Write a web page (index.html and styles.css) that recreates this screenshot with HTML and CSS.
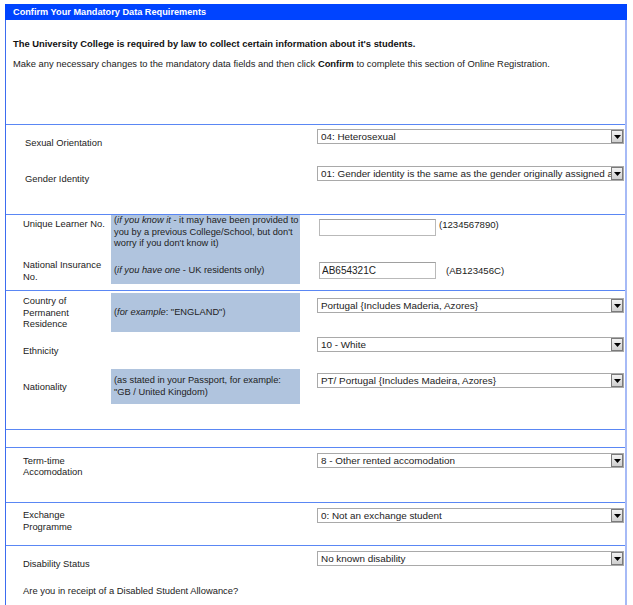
FILE: index.html
```html
<!DOCTYPE html>
<html lang="en">
<head>
<meta charset="utf-8">
<title>Confirm Your Mandatory Data Requirements</title>
<link rel="stylesheet" href="styles.css">
</head>
<body>
<div class="panel">
  <div class="head">Confirm Your Mandatory Data Requirements</div>
  <div class="body">
    <div class="intro">
      <p class="lead">The University College is required by law to collect certain information about it's students.</p>
      <p class="note">Make any necessary changes to the mandatory data fields and then click <b>Confirm</b> to complete this section of Online Registration.</p>
    </div>

    <div class="sec sec-a">
      <div class="row row-a">
        <div class="lab lab-a">Sexual Orientation</div>
        <div class="gap"></div>
        <div class="field f4"><div class="sel"><span class="val">04: Heterosexual</span><span class="btn"><svg width="7" height="4" viewBox="0 0 7 4"><path d="M0 0h7L3.5 4z" fill="#000"/></svg></span></div></div>
      </div>
      <div class="row row-a">
        <div class="lab lab-a">Gender Identity</div>
        <div class="gap"></div>
        <div class="field f5"><div class="sel"><span class="val">01: Gender identity is the same as the gender originally assigned at birth</span><span class="btn"><svg width="7" height="4" viewBox="0 0 7 4"><path d="M0 0h7L3.5 4z" fill="#000"/></svg></span></div></div>
      </div>
    </div>

    <div class="sec sec-b">
      <div class="row row-b1">
        <div class="lab top3">Unique Learner No.</div>
        <div class="help top3"><span>(<i>if you know it</i> - it may have been provided to you by a previous College/School, but don't worry if you don't know it)</span></div>
        <div class="field fin f4"><input class="txt" type="text" value=""><span class="hint h1">(1234567890)</span></div>
      </div>
      <div class="row row-b2">
        <div class="lab">National Insurance No.</div>
        <div class="help mid"><span>(<i>if you have one</i> - UK residents only)</span></div>
        <div class="field fin mid"><input class="txt" type="text" value="AB654321C"><span class="hint h2">(AB123456C)</span></div>
      </div>
    </div>

    <div class="sec sec-c">
      <div class="row row-c1">
        <div class="lab">Country of Permanent Residence</div>
        <div class="help mid"><span>(<i>for example</i>: "ENGLAND")</span></div>
        <div class="field f5"><div class="sel"><span class="val">Portugal {Includes Maderia, Azores}</span><span class="btn"><svg width="7" height="4" viewBox="0 0 7 4"><path d="M0 0h7L3.5 4z" fill="#000"/></svg></span></div></div>
      </div>
      <div class="row row-c2">
        <div class="lab">Ethnicity</div>
        <div class="gap"></div>
        <div class="field f5"><div class="sel"><span class="val">10 - White</span><span class="btn"><svg width="7" height="4" viewBox="0 0 7 4"><path d="M0 0h7L3.5 4z" fill="#000"/></svg></span></div></div>
      </div>
      <div class="row row-c3">
        <div class="lab">Nationality</div>
        <div class="help mid"><span>(as stated in your Passport, for example: "GB / United Kingdom)</span></div>
        <div class="field f4"><div class="sel"><span class="val">PT/ Portugal {Includes Madeira, Azores}</span><span class="btn"><svg width="7" height="4" viewBox="0 0 7 4"><path d="M0 0h7L3.5 4z" fill="#000"/></svg></span></div></div>
      </div>
    </div>

    <div class="sec sec-d"></div>

    <div class="sec sec-e">
      <div class="row">
        <div class="lab lab-e">Term-time<br>Accomodation</div>
        <div class="gap"></div>
        <div class="field f5"><div class="sel"><span class="val">8 - Other rented accomodation</span><span class="btn"><svg width="7" height="4" viewBox="0 0 7 4"><path d="M0 0h7L3.5 4z" fill="#000"/></svg></span></div></div>
      </div>
    </div>

    <div class="sec sec-f">
      <div class="row">
        <div class="lab lab-f">Exchange<br>Programme</div>
        <div class="gap"></div>
        <div class="field f5"><div class="sel"><span class="val">0: Not an exchange student</span><span class="btn"><svg width="7" height="4" viewBox="0 0 7 4"><path d="M0 0h7L3.5 4z" fill="#000"/></svg></span></div></div>
      </div>
    </div>

    <div class="sec sec-g">
      <div class="row">
        <div class="lab lab-g">Disability Status</div>
        <div class="gap"></div>
        <div class="field f5"><div class="sel"><span class="val">No known disability</span><span class="btn"><svg width="7" height="4" viewBox="0 0 7 4"><path d="M0 0h7L3.5 4z" fill="#000"/></svg></span></div></div>
      </div>
      <p class="question">Are you in receipt of a Disabled Student Allowance?</p>
    </div>
  </div>
</div>
</body>
</html>
```

FILE: styles.css
```css
* { box-sizing: border-box; }

html, body {
  margin: 0;
  padding: 0;
  background: #fff;
}

body {
  font-family: "Liberation Sans", Arial, sans-serif;
  font-size: 9.4px;
  line-height: 11.5px;
  color: #222;
}

.panel {
  width: 622px;
  margin: 4px 0 0 5px;
}

.head {
  height: 16px;
  line-height: 16px;
  background: #0044ff;
  color: #fff;
  font-weight: bold;
  font-size: 9.2px;
  padding-left: 8px;
}

.body {
  border-left: 1px solid #3d6cf0;
  border-right: 2px solid #a6baf6;
}

.intro {
  height: 104px;
  padding: 17.5px 0 0 7px;
}

.intro p { margin: 0; }

.lead {
  font-weight: bold;
  color: #111;
}

.note {
  margin-top: 9.25px !important;
}

.note b { color: #111; }

.sec {
  border-top: 1px solid #5a87f4;
}

.row {
  display: grid;
  grid-template-columns: 105px 189px 1fr;
}

.lab {
  padding-left: 17px;
  padding-right: 4px;
  align-self: center;
}

.lab-a { padding-left: 19px; }

.top3 {
  align-self: start;
  padding-top: 3px;
}

.help {
  background: #b0c4de;
  padding: 0 0 0 3px;
  font-size: 9.3px;
  display: flex;
  align-self: stretch;
}

.help.mid { align-items: center; }

.field {
  padding-left: 17px;
  align-self: start;
}

.f4 { padding-top: 4px; }
.f5 { padding-top: 5px; }

.field.mid { align-self: center; padding-top: 0; }

.fin {
  display: flex;
  align-items: flex-start;
  padding-left: 19px;
}

.field.fin.mid { align-items: center; }

.sel {
  display: flex;
  width: 307px;
  height: 15px;
  border: 1px solid #a9a9a9;
  background: #fff;
}

.val {
  flex: 1;
  min-width: 0;
  overflow: hidden;
  white-space: nowrap;
  padding-left: 3px;
  font-size: 9.9px;
  line-height: 13px;
  color: #222;
}

.btn {
  width: 12px;
  height: 13px;
  border: 1px solid #7b7b7b;
  background: linear-gradient(#f2f2f2, #cfcfcf);
  display: flex;
  align-items: center;
  justify-content: center;
  flex: none;
}

.btn svg { display: block; }

.txt {
  width: 117px;
  height: 17px;
  margin: 0;
  border: 1px solid #b9b9b9;
  border-top-color: #a0a0a0;
  background: #fff;
  padding: 0 2px;
  font-family: "Liberation Sans", Arial, sans-serif;
  font-size: 10px;
  color: #222;
  outline: none;
}

.hint { color: #222; font-size: 9.6px; }
.h1 { margin-left: 3px; }
.h2 { margin-left: 10px; }

/* section geometry */
.sec-a { height: 90px; }
.row-a { height: 36px; }

.sec-b { height: 76px; }
.row-b1 { height: 42px; }
.row-b2 { height: 27px; }

.sec-c { height: 139px; padding-top: 2px; }
.row-c1 { height: 39px; }
.row-c2 { height: 37px; }
.row-c3 { height: 35px; }

.sec-d { height: 18px; }

.sec-e { height: 55px; }
.lab-e { align-self: start; padding-top: 6.5px; }

.sec-f { height: 43px; }
.lab-f { align-self: start; padding-top: 6px; }

.sec-g { height: 70px; }
.lab-g { align-self: start; padding-top: 12px; }

.question {
  margin: 15.5px 0 0 17px;
}
```
